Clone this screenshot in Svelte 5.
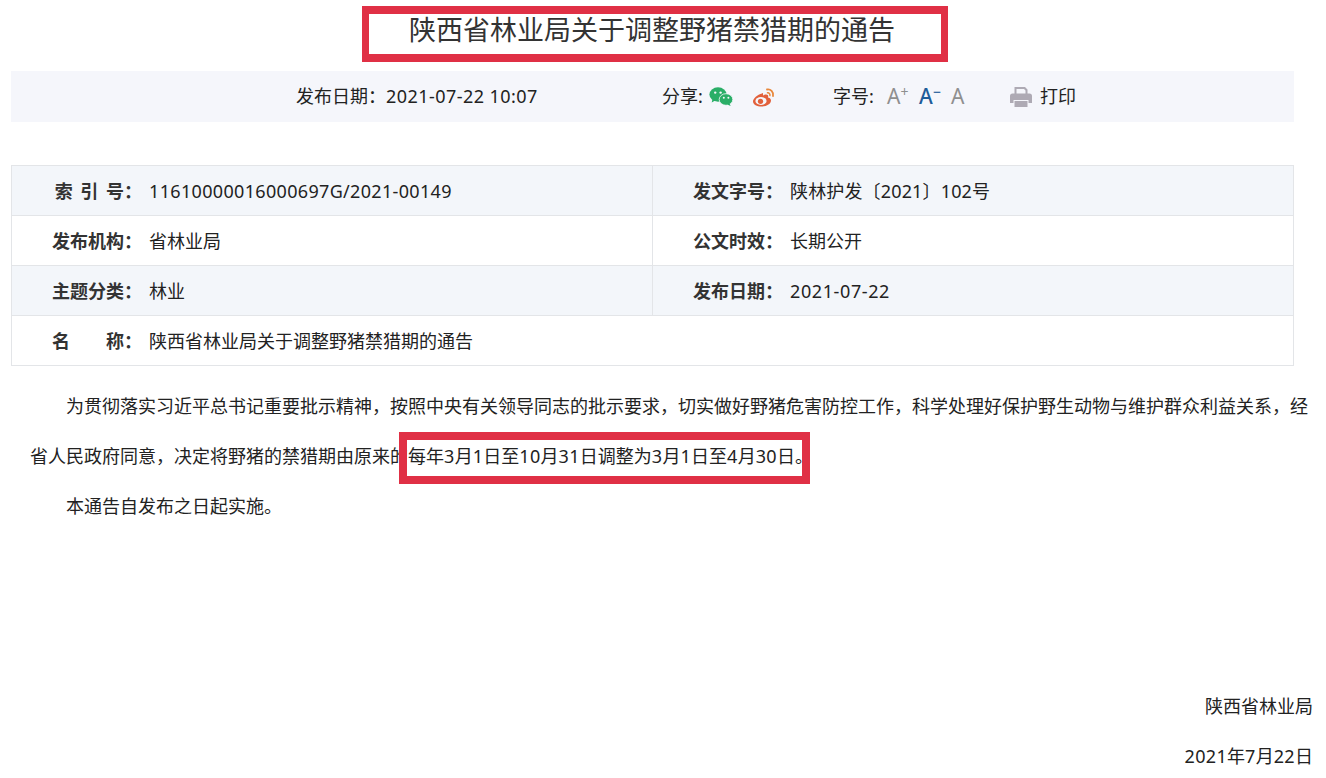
<script>
  const rows = [
    { shade: true, cells: [
      { label: "索 引 号&#xFF1A;", value: "11610000016000697G/2021-00149", kind: "num" },
      { label: "发文字号&#xFF1A;", value: "陕林护发〔2021〕102号", kind: "doc" }
    ] },
    { shade: false, cells: [
      { label: "发布机构&#xFF1A;", value: "省林业局" },
      { label: "公文时效&#xFF1A;", value: "长期公开" }
    ] },
    { shade: true, cells: [
      { label: "主题分类&#xFF1A;", value: "林业" },
      { label: "发布日期&#xFF1A;", value: "2021-07-22", kind: "datenum" }
    ] }
  ];
</script>

<div class="page">
  <h1 class="title">陕西省林业局关于调整野猪禁猎期的通告</h1>
  <div class="mark mark-title"></div>

  <div class="toolbar">
    <span class="date">发布日期&#xFF1A;<span class="stamp">2021-07-22 10:07</span></span>
    <span class="share">分享:</span>
    <svg class="wechat" viewBox="0 0 24 20" width="24" height="20">
      <ellipse cx="9" cy="7.5" rx="8.6" ry="7.2" fill="#2aae67" />
      <path d="M3.5 12l-.8 3.6 4-2.4z" fill="#2aae67" />
      <ellipse cx="17" cy="12.5" rx="6.8" ry="5.8" fill="#2aae67" stroke="#f5f6fb" stroke-width="0.8" />
      <path d="M20.5 16.5l1.2 2.6-3.6-1.6z" fill="#2aae67" />
      <circle cx="6.2" cy="5.6" r="1.2" fill="#f5f6fb" />
      <circle cx="11.6" cy="5.6" r="1.2" fill="#f5f6fb" />
      <circle cx="14.8" cy="10.8" r="1" fill="#f5f6fb" />
      <circle cx="19.4" cy="10.8" r="1" fill="#f5f6fb" />
    </svg>
    <svg class="weibo" viewBox="0 0 24 20" width="24" height="20">
      <path d="M10 6.500C5.500 7.500 1 11.500 1 14.500c0 3 4 5 8.500 5 5.500 0 9.500-3 9.500-6 0-2-2-2.700-3-3 .5-1.500.3-3-2-3-1 0-2.200.500-3 1 .2-1.500 0-3-1-2.500z" fill="#e2603b" />
      <ellipse cx="9" cy="14" rx="5.600" ry="3.900" fill="#f5f6fb" />
      <circle cx="8.500" cy="14.300" r="2.600" fill="#e2603b" />
      <path d="M15 2.500c3.500-.8 6.800 2.400 6 6.500" fill="none" stroke="#e8883c" stroke-width="1.800" stroke-linecap="round" />
      <path d="M15.500 5.800c1.500-.3 2.800 1 2.400 2.700" fill="none" stroke="#e8883c" stroke-width="1.500" stroke-linecap="round" />
    </svg>
    <span class="size">字号:</span>
    <span class="aa grey">A<sup>+</sup></span>
    <span class="aa blue">A<sup>−</sup></span>
    <span class="aa grey last">A</span>
    <svg class="printer" viewBox="0 0 22 20" width="22" height="20">
      <path d="M4.500 8V0h10.500l2.500 2.500V8h-2V3.500L14 2H6.500v6z" fill="#aeaab4" />
      <path d="M2.500 6.500h17A2.500 2.500 0 0 1 22 9v7h-3.500v-3h-15v3H0V9a2.500 2.500 0 0 1 2.500-2.500z" fill="#aeaab4" />
      <path d="M4.500 14h13v6h-13z" fill="#aeaab4" />
    </svg>
    <span class="print">打印</span>
  </div>

  <div class="info">
    {#each rows as row}
      <div class="row" class:shade={row.shade}>
        {#each row.cells as cell}
          <div class="cell">
            <span class="label">{@html cell.label}</span>
            <span class="value {cell.kind ?? ''}">{cell.value}</span>
          </div>
        {/each}
      </div>
    {/each}
    <div class="row">
      <div class="cell wide">
        <span class="label spread"><span>名</span><span>称&#xFF1A;</span></span>
        <span class="value">陕西省林业局关于调整野猪禁猎期的通告</span>
      </div>
    </div>
  </div>

  <div class="article">
    <p class="indent">为贯彻落实习近平总书记重要批示精神&#xFF0C;按照中央有关领导同志的批示要求&#xFF0C;切实做好野猪危害防控工作&#xFF0C;科学处理好保护野生动物与维护群众利益关系&#xFF0C;经省人民政府同意&#xFF0C;决定将野猪的禁猎期由原来的每年<span class="num">3</span>月<span class="num">1</span>日至<span class="num">10</span>月<span class="num">31</span>日调整为<span class="num">3</span>月<span class="num">1</span>日至<span class="num">4</span>月<span class="num">30</span>日。</p>
    <p class="indent">本通告自发布之日起实施。</p>
    <p class="sign first">陕西省林业局</p>
    <p class="sign"><span class="num">2021</span>年<span class="num">7</span>月<span class="num">22</span>日</p>
  </div>
  <div class="mark mark-body"></div>
</div>

<style>
  :global(body) {
    margin: 0;
    background: #fff;
  }
  .page {
    position: relative;
    height: 778px;
    overflow: hidden;
    font-family: "Noto Sans", "Noto Sans CJK SC", sans-serif;
    color: #222;
    font-size: 18px;
  }
  .title {
    margin: 0;
    padding: 13px 22px 0 0;
    height: 58px;
    box-sizing: border-box;
    text-align: center;
    font-size: 27px;
    line-height: 34px;
    font-weight: 400;
    color: #333;
  }
  .mark {
    position: absolute;
    box-sizing: border-box;
    border: 8px solid #e03045;
  }
  .mark-title {
    left: 362px;
    top: 6px;
    width: 586px;
    height: 56px;
    border-width: 8px 7px;
  }
  .mark-body {
    left: 399px;
    top: 432px;
    width: 411px;
    height: 52px;
  }
  .toolbar {
    margin: 13px 32px 0 11px;
    height: 51px;
    background: #f5f6fb;
    display: flex;
    align-items: center;
    padding: 0 0 2px 285px;
    box-sizing: border-box;
    white-space: nowrap;
    line-height: 24px;
  }
  .date { width: 366px; }
  .stamp { letter-spacing: 0.45px; }
  .share { width: 47px; }
  .wechat { margin-top: 2px; }
  .weibo { margin: 2px 0 0 19px; }
  .size { margin-left: 57px; width: 54px; }
  .aa {
    font-size: 21px;
    width: 32px;
  }
  .last { width: 59px; }
  .aa sup {
    font-size: 14px;
    line-height: 0;
    vertical-align: 7px;
  }
  .grey { color: #8f8f8f; }
  .blue { color: #1f5c99; font-weight: 500; }
  .printer { margin: 2px 0 0 0; }
  .print { margin-left: 8px; }
  .info {
    margin: 43px 32px 0 11px;
    border: 1px solid #e3e5e8;
    border-bottom: 0;
  }
  .row {
    display: flex;
    height: 50px;
    border-bottom: 1px solid #e3e5e8;
    box-sizing: border-box;
    line-height: 24px;
  }
  .shade { background: #f3f6fa; }
  .cell {
    flex: 0 0 640px;
    display: flex;
    align-items: center;
    box-sizing: border-box;
  }
  .cell + .cell {
    flex: 1;
    border-left: 1px solid #e3e5e8;
  }
  .cell.wide { flex: 1; }
  .label {
    width: 130px;
    flex: none;
    text-align: right;
    font-weight: 700;
    color: #333;
    margin-right: 7px;
    word-spacing: 3px;
    white-space: pre;
  }
  .spread {
    display: flex;
    justify-content: space-between;
    box-sizing: border-box;
    padding-left: 40px;
  }
  .num { letter-spacing: 0.33px; }
  .doc { letter-spacing: 0.15px; }
  .datenum { letter-spacing: 0.6px; }
  .article {
    margin: 15px 13px 0 30px;
    line-height: 50px;
  }
  .article p { margin: 0; }
  .indent { text-indent: 36px; }
  .sign { text-align: right; }
  .first { margin-top: 150px !important; }
</style>
